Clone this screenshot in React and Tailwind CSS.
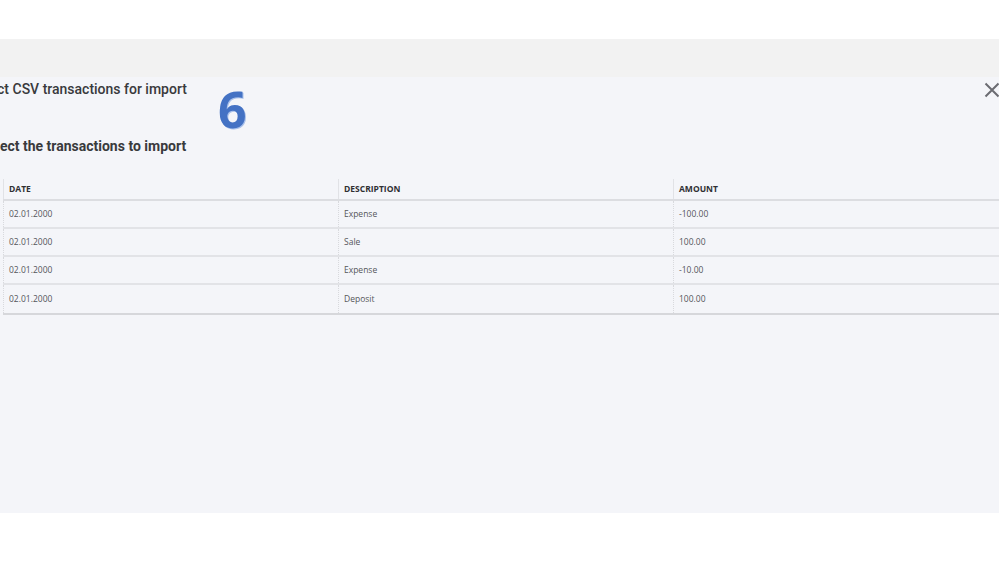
import React from "react";

const rows = [
  ["02.01.2000", "Expense", "-100.00"],
  ["02.01.2000", "Sale", "100.00"],
  ["02.01.2000", "Expense", "-10.00"],
  ["02.01.2000", "Deposit", "100.00"],
];

export default function App() {
  return (
    <div className="w-[999px] h-[562px] bg-white overflow-hidden" style={{ fontFamily: '"Open Sans", "Noto Sans", sans-serif' }}>
      <div className="h-[39px] bg-white" />
      <div className="h-[38px] bg-[#f2f2f2]" />
      <div className="relative h-[436px] bg-[#f4f5f9] overflow-hidden">
        <div
          className="pt-[2px] -ml-[30px] text-[14px] leading-[20px] font-medium text-[#393a3d] whitespace-nowrap"
          style={{ fontFamily: 'Roboto, "Liberation Sans", sans-serif' }}
        >
          Select CSV transactions for import
        </div>
        <div
          className="absolute left-[218px] top-[2px] text-[50px] leading-[60px] font-bold text-[#4472c4]"
          style={{ fontFamily: '"Noto Sans", sans-serif', textShadow: "1px 1px 0 #a9c0ea" }}
        >
          6
        </div>
        <svg className="absolute left-[984px] top-[5px]" width="16" height="16" viewBox="0 0 16 16">
          <path d="M1.5 1.5 L14.5 14.5 M14.5 1.5 L1.5 14.5" stroke="#6b6c72" strokeWidth="2" />
        </svg>
        <div
          className="mt-[37px] -ml-[20px] text-[14px] leading-[20px] font-bold text-[#393a3d] whitespace-nowrap"
          style={{ fontFamily: 'Roboto, "Liberation Sans", sans-serif' }}
        >
          Select the transactions to import
        </div>
        <div className="mt-[23px] ml-[3px] w-[1010px] border-b-2 border-[#d6d7db]">
          <div className="grid grid-cols-[335px_335px_340px] h-[22px] border-b-2 border-[#dcdde1]">
            {["DATE", "DESCRIPTION", "AMOUNT"].map((h) => (
              <div key={h} className="border-l border-[#e1e2e6] pl-[5px] flex items-center text-[8.5px] font-bold text-[#2f3033]">
                {h}
              </div>
            ))}
          </div>
          {rows.map((r, i) => (
            <div key={i} className={`grid grid-cols-[335px_335px_340px] h-[28px] ${i < rows.length - 1 ? "border-b-2 border-[#e2e3e7]" : ""}`}>
              {r.map((c, j) => (
                <div key={j} className="border-l border-dotted border-[#d8d9dd] pl-[5px] flex items-center text-[8.5px] text-[#55565b]">
                  {c}
                </div>
              ))}
            </div>
          ))}
        </div>
      </div>
      <div className="bg-white" />
    </div>
  );
}
